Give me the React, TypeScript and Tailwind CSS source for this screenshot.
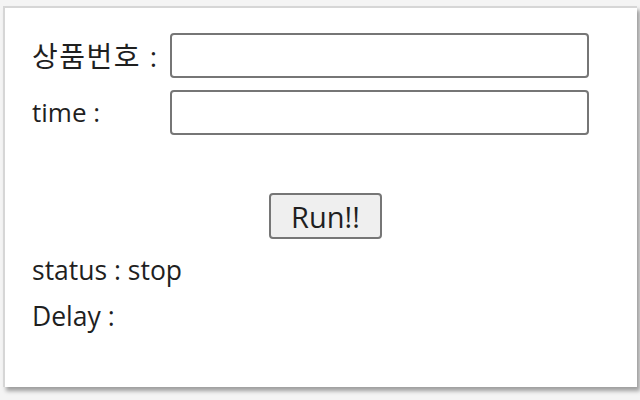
export default function App() {
  const font = { fontFamily: '"Open Sans", "Noto Sans CJK KR", sans-serif' };
  return (
    <div className="w-[640px] h-[400px] bg-[#f4f4f4] pt-[6px] pl-[3px]" style={font}>
      <div className="w-[634px] h-[381px] bg-white border-l-2 border-t-2 border-[#d6d6d6] shadow-[3px_4px_4px_rgba(0,0,0,0.35)] pl-[27px] pt-[25px] text-[#1f1f1f]">
        <div className="flex items-center h-[45px]">
          <span className="w-[138px] text-[28px] tracking-[1.5px]">상품번호 :</span>
          <input className="w-[419px] h-[45px] border-2 border-[#767676] rounded-[4px] bg-white" />
        </div>
        <div className="flex items-center h-[45px] mt-[12px]">
          <span className="w-[138px] text-[26px]">time :</span>
          <input className="w-[419px] h-[45px] border-2 border-[#767676] rounded-[4px] bg-white" />
        </div>
        <button className="ml-[237px] mt-[58px] w-[113px] h-[46px] border-2 border-[#767676] rounded-[4px] bg-[#efefef] text-[29px] leading-none">
          Run!!
        </button>
        <div className="mt-[8px] text-[26.5px] leading-[46px]">status : stop</div>
        <div className="text-[26.5px] leading-[46px]">Delay :</div>
      </div>
    </div>
  );
}
